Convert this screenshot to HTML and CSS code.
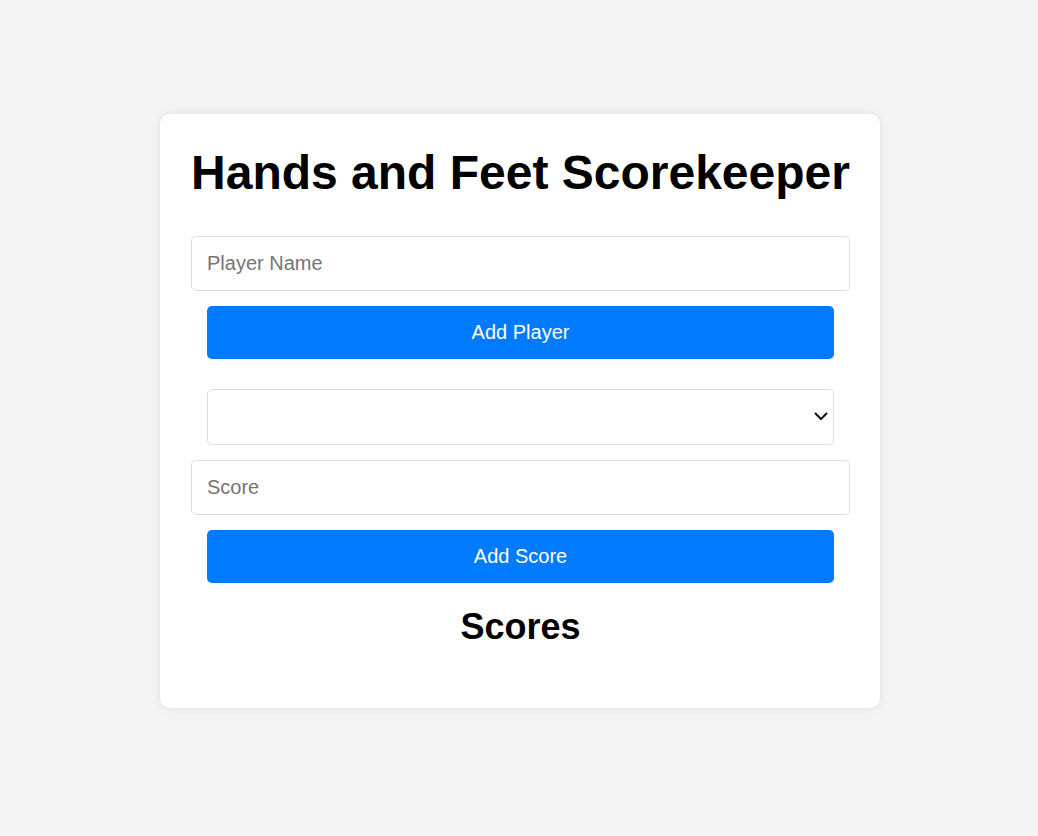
FILE: index.html
```html
<!DOCTYPE html>
<html lang="en">
<head>
<meta charset="utf-8">
<title>Hands and Feet Scorekeeper</title>
<link rel="stylesheet" href="styles.css">
</head>
<body>
<main class="card">
  <h1 class="title">Hands and Feet Scorekeeper</h1>
  <input class="field" type="text" placeholder="Player Name">
  <button class="btn" type="button">Add Player</button>
  <div class="picker-wrap">
    <select class="picker"></select>
    <svg class="picker-arrow" width="14" height="9" viewBox="0 0 14 9" aria-hidden="true">
      <path d="M1.5 1.5 L7 7 L12.5 1.5" fill="none" stroke="#111" stroke-width="2" stroke-linecap="round" stroke-linejoin="round"/>
    </svg>
  </div>
  <input class="field field-score" type="number" placeholder="Score">
  <button class="btn" type="button">Add Score</button>
  <h2 class="subtitle">Scores</h2>
  <ul class="score-list"></ul>
</main>
</body>
</html>
```

FILE: styles.css
```css
html, body {
  margin: 0;
  padding: 0;
}

body {
  background: #f4f4f4;
  font-family: "Liberation Sans", Arial, sans-serif;
  padding: 114px 0 0 2px;
  min-height: 836px;
  box-sizing: border-box;
}

.card {
  box-sizing: border-box;
  width: 720px;
  margin: 0 auto;
  background: #fff;
  border-radius: 10px;
  box-shadow: 0 0 10px rgba(0, 0, 0, 0.1);
  padding: 31px 30px 31px 31px;
  display: flex;
  flex-direction: column;
}

.title {
  margin: 0 0 36px;
  font-size: 48px;
  line-height: 55px;
  font-weight: bold;
  text-align: center;
  color: #000;
  white-space: nowrap;
}

.field {
  box-sizing: border-box;
  width: 100%;
  height: 55px;
  padding: 15px;
  border: 1px solid #ddd;
  border-radius: 5px;
  font-family: "Liberation Sans", Arial, sans-serif;
  font-size: 20px;
  color: #000;
  background: #fff;
  outline: none;
  margin: 0;
}

.field::placeholder {
  color: #757575;
}

.field-score {
  margin-top: 15px;
  -moz-appearance: textfield;
}

.field-score::-webkit-outer-spin-button,
.field-score::-webkit-inner-spin-button {
  -webkit-appearance: none;
  margin: 0;
}

.btn {
  box-sizing: border-box;
  margin: 15px 16px 0;
  height: 53px;
  padding: 15px;
  border: none;
  border-radius: 5px;
  background: #007bff;
  color: #fff;
  font-family: "Liberation Sans", Arial, sans-serif;
  font-size: 20px;
  cursor: pointer;
}

.picker-wrap {
  position: relative;
  margin: 30px 16px 0;
}

.picker {
  display: block;
  box-sizing: border-box;
  width: 100%;
  height: 56px;
  padding: 15px;
  border: 1px solid #ddd;
  border-radius: 5px;
  background: #fff;
  font-family: "Liberation Sans", Arial, sans-serif;
  font-size: 20px;
  color: #000;
  -webkit-appearance: none;
  appearance: none;
  outline: none;
}

.picker-arrow {
  position: absolute;
  right: 6px;
  top: 23px;
  pointer-events: none;
}

.subtitle {
  margin: 23px 0 30px;
  font-size: 36px;
  line-height: 41px;
  font-weight: bold;
  text-align: center;
  color: #000;
}

.score-list {
  margin: 0;
  padding: 0;
  list-style: none;
}
```
